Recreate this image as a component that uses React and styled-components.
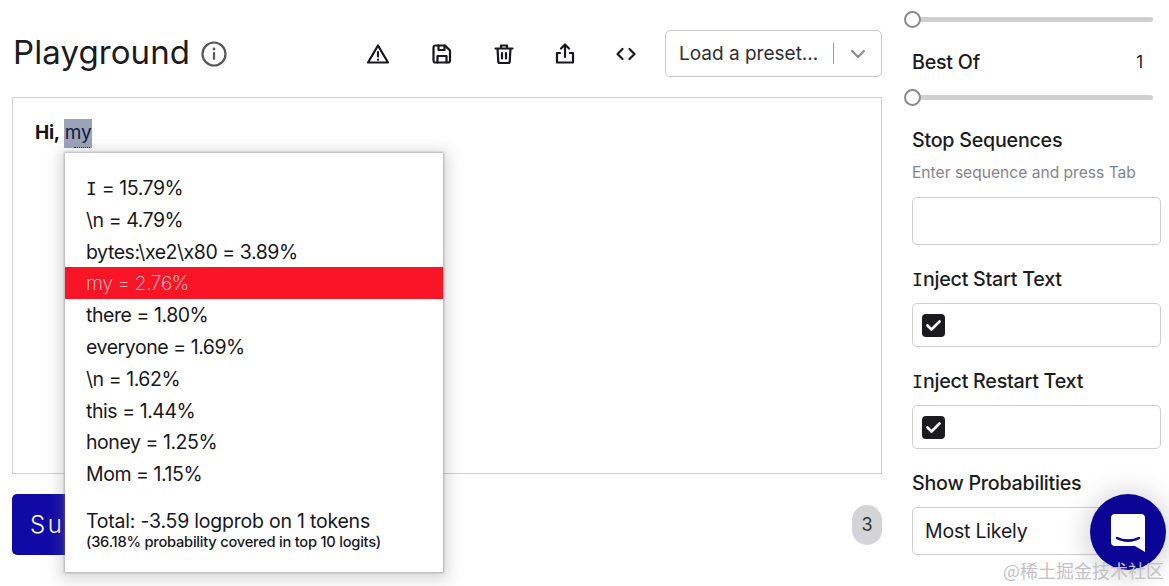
import React from 'react';
import styled, { createGlobalStyle } from 'styled-components';

const Global = createGlobalStyle`
  html, body { margin: 0; padding: 0; background: #fff; overflow: hidden; }
  * { box-sizing: border-box; }
  body { font-family: Inter, "Noto Sans", sans-serif; color: #15151a; }
`;
const Page = styled.div`
  position: relative; width: 1169px; height: 586px; overflow: hidden;
  display: flex; padding-left: 12px; gap: 30px;
`;
const Main = styled.main`width: 870px; flex: none; position: relative;`;
const Header = styled.header`
  display: flex; align-items: center; height: 97px; padding-top: 7px;
`;
const Title = styled.h1`
  margin: 0 0 0 1px; font-size: 33px; line-height: 40px; font-weight: 400; letter-spacing: .1px; color: #1b1b1f;
`;
const InfoIcon = styled.svg`width: 28px; height: 28px; margin-left: 10px; color: #57575c; margin-top: 3px;`;
const Tools = styled.div`display: flex; align-items: center; margin-left: auto; margin-right: 27px; margin-top: 3px;`;
const Tool = styled.svg`width: 24px; height: 24px; display: block; color: #17171b; margin-right: ${p => p.$after || 0}px;`;
const PresetBox = styled.div`
  width: 217px; height: 47px; border: 1px solid #c9c9cc; border-radius: 5px; display: flex; align-items: center;
  padding-left: 13px; font-size: 19px; color: #2f2f33; margin-top: 3px;
`;
const PresetLabel = styled.span`flex: 1;`;
const Sep = styled.span`width: 1px; height: 21px; background: #9a9a9d; margin-right: 14px;`;
const Chevron = styled.svg`width: 20px; height: 20px; color: #8d8d91; margin-right: 13px;`;
const Editor = styled.div`
  height: 377px; border: 1.5px solid #cfcfd1; padding: 21px 22px; font-size: 19px; line-height: 27px;
  letter-spacing: -.3px;
`;
const Bold = styled.b`font-weight: 700; color: #111;`;
const Token = styled.span`
  position: relative; background: #9aa3b8; color: #111a3c; display: inline-block; height: 29px; margin-left: -1px; padding: 0 1px; font-size: 19px; font-weight: 400;
  &::after { content: ''; position: absolute; left: 10px; right: 2px; bottom: 0; border-bottom: 1px dotted #1c1cb0; }
`;
const Footer = styled.div`display: flex; align-items: center; justify-content: space-between; margin-top: 20px;`;
const Submit = styled.button`
  width: 140px; height: 61px; background: #1009a6; color: #fff; border: 0; border-radius: 5px; text-align: left;
  padding-left: 18px; font: 300 24px Inter, sans-serif; letter-spacing: 2.5px;
`;
const Count = styled.div`
  width: 30px; height: 40px; border-radius: 15px; background: #d4d4d6; display: flex; align-items: center; justify-content: center;
  font-size: 18px; color: #333;
`;
const Popover = styled.div`
  position: absolute; left: 53px; top: 153px; width: 378px; height: 419px; background: #fff; padding-top: 19px;
  box-shadow: 0 0 2px 1px rgba(120,120,125,.45), 0 3px 14px 5px rgba(120,120,125,.28);
  color: #18181c;
`;
const SlabI = styled.span`font-family: "DejaVu Sans Mono", monospace; font-size: .92em; line-height: 0; letter-spacing: 0;`;
const Prob = styled.div`
  height: 31.8px; line-height: 32px; padding-left: 21px; font-size: 19.5px; letter-spacing: -.45px;
  background: ${p => (p.$active ? '#f91526' : 'transparent')};
  color: ${p => (p.$active ? '#ffd9dc' : 'inherit')};
  font-weight: ${p => (p.$active ? 200 : 400)};
`;
const Total = styled.div`margin-top: 18px; padding-left: 21px; font-size: 19.5px; line-height: 26px; letter-spacing: -.22px;`;
const Covered = styled.div`padding-left: 21px; font-size: 14.7px; line-height: 17px; font-weight: 500; letter-spacing: -.25px;`;
const Side = styled.aside`width: 248px; flex: none; padding-top: 9px;`;
const Slider = styled.div`
  position: relative; height: 20px; display: flex; align-items: center; margin-top: ${p => p.$top || 0}px;
`;
const Rail = styled.div`width: 241px; height: 5px; background: #cfcfd1; border-radius: 3px;`;
const Thumb = styled.div`
  position: absolute; left: -8px; top: 2px; width: 17px; height: 17px; border-radius: 50%; background: #fff; border: 2px solid #8a8a90;
`;
const Label = styled.div`
  font-size: 19.7px; line-height: 26px; height: 26px; font-weight: 500; letter-spacing: -.25px; color: #1c1c20;
  margin-top: ${p => p.$top || 0}px;
  display: flex; justify-content: space-between;
`;
const LabelText = styled.span`white-space: pre;`;
const Value = styled.span`font-size: 17px; margin-right: 17px; font-weight: 400;`;
const Hint = styled.div`font-size: 15.6px; line-height: 20px; color: #85858b; margin-top: 10px;`;
const Field = styled.div`
  width: 249px; height: ${p => p.$h}px; border: 1.5px solid #cdcdd0; border-radius: 5px; margin-top: ${p => p.$top}px;
  display: flex; align-items: center; padding-left: 9px;
`;
const Check = styled.div`
  width: 23px; height: 23px; border-radius: 4px; background: #1b1b1f; display: flex; align-items: center; justify-content: center;
`;
const SelectText = styled.span`font-size: 19.5px; letter-spacing: -.2px; margin-left: 3px; color: #1a1a1e;`;
const Chat = styled.div`
  position: absolute; left: 1090px; top: 494px; width: 76px; height: 76px; border-radius: 50%; background: #0b0596;
  display: flex; align-items: center; justify-content: center;
  box-shadow: 0 2px 22px 6px rgba(120,120,125,.28);
`;
const ChatIcon = styled.svg`width: 36px; height: 40px; margin-top: 1px;`;
const Watermark = styled.div`
  position: absolute; right: 5px; top: 557px; font: 400 18px "Noto Sans CJK SC", sans-serif; color: #c2c2c5; white-space: nowrap;
`;

const probs = ['I = 15.79%', '\\n = 4.79%', 'bytes:\\xe2\\x80 = 3.89%', 'my = 2.76%', 'there = 1.80%', 'everyone = 1.69%', '\\n = 1.62%', 'this = 1.44%', 'honey = 1.25%', 'Mom = 1.15%'];

const stroke = { fill: 'none', stroke: 'currentColor', strokeWidth: 2.2, strokeLinecap: 'round', strokeLinejoin: 'round' };

const CheckMark = () => (
  <svg width="15" height="13" viewBox="0 0 15 13"><path d="M1.500 6.500l4 4L13.500 2.500" fill="none" stroke="#fff" strokeWidth="2.6" strokeLinecap="round" strokeLinejoin="round" /></svg>
);

const withSlab = text => (text.startsWith('I') ? <><SlabI>I</SlabI>{text.slice(1)}</> : text);

export default function App() {
  return (
    <Page>
      <Global />
      <Main>
        <Header>
          <Title>Playground</Title>
          <InfoIcon viewBox="0 0 28 28"><circle cx="14" cy="14" r="11.5" fill="none" stroke="currentColor" strokeWidth="2.2" /><path d="M14 13v6" stroke="currentColor" strokeWidth="2.2" strokeLinecap="round" /><circle cx="14" cy="9" r="1.4" fill="currentColor" /></InfoIcon>
          <Tools>
            <Tool $after={40} viewBox="0 0 24 24" {...stroke}><path d="M12 3.500L2 20.500h20z" /><path d="M12 10v4.500M12 17.500v.2" /></Tool>
            <Tool $after={38} viewBox="0 0 24 24" {...stroke}><path d="M5.500 3.500h9.500l5 5v10a2 2 0 0 1-2 2H5.500a2 2 0 0 1-2-2v-13a2 2 0 0 1 2-2z" /><path d="M7.500 20.500v-6.500h9v6.500M8.500 3.500v4.500h6V3.500" /></Tool>
            <Tool $after={37} viewBox="0 0 24 24" {...stroke}><path d="M3.500 6.500h17M9 6V3.500h6V6M5.500 6.500l.8 13a1.500 1.500 0 0 0 1.500 1.500h8.400a1.500 1.500 0 0 0 1.500-1.500l.8-13M10 11v5.500M14 11v5.500" /></Tool>
            <Tool $after={37} viewBox="0 0 24 24" {...stroke}><path d="M12 15V3M8 6.500L12 2.500l4 4M7 11H4v9.500h16V11h-3" /></Tool>
            <Tool viewBox="0 0 24 24" {...stroke}><path d="M8.500 7L3.500 12l5 5M15.500 7l5 5-5 5" /></Tool>
          </Tools>
          <PresetBox>
            <PresetLabel>Load a preset...</PresetLabel>
            <Sep />
            <Chevron viewBox="0 0 20 20"><path d="M4 7l6 6 6-6" fill="none" stroke="currentColor" strokeWidth="2.2" strokeLinecap="round" /></Chevron>
          </PresetBox>
        </Header>
        <Editor><Bold>Hi,</Bold> <Token>my</Token></Editor>
        <Footer>
          <Submit>Submit</Submit>
          <Count>3</Count>
        </Footer>
        <Popover>
          {probs.map((p, i) => <Prob key={i} $active={i === 3}>{withSlab(p)}</Prob>)}
          <Total>Total: -3.59 logprob on 1 tokens</Total>
          <Covered>(36.18% probability covered in top 10 logits)</Covered>
        </Popover>
      </Main>
      <Side>
        <Slider><Rail /><Thumb /></Slider>
        <Label $top={20}>Best Of<Value>1</Value></Label>
        <Slider $top={12}><Rail /><Thumb /></Slider>
        <Label $top={20}>Stop Sequences</Label>
        <Hint>Enter sequence and press Tab</Hint>
        <Field $h={48} $top={14} />
        <Label $top={21}><LabelText>{withSlab('Inject Start Text')}</LabelText></Label>
        <Field $h={44} $top={11}><Check><CheckMark /></Check></Field>
        <Label $top={21}><LabelText>{withSlab('Inject Restart Text')}</LabelText></Label>
        <Field $h={44} $top={11}><Check><CheckMark /></Check></Field>
        <Label $top={21}>Show Probabilities</Label>
        <Field $h={48} $top={11}><SelectText>Most Likely</SelectText></Field>
      </Side>
      <Chat>
        <ChatIcon viewBox="0 0 36 40"><path d="M5 1h26a4 4 0 0 1 4 4v34l-10-6H5a4 4 0 0 1-4-4V5a4 4 0 0 1 4-4z" fill="#fff" /><path d="M7 25c6 3.500 16 3.500 22 0" fill="none" stroke="#0b0596" strokeWidth="2.6" strokeLinecap="round" /></ChatIcon>
      </Chat>
      <Watermark>@稀土掘金技术社区</Watermark>
    </Page>
  );
}
